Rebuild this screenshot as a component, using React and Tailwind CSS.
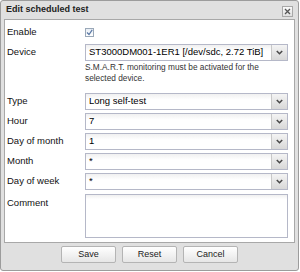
import React from 'react';

const font = { fontFamily: '"Liberation Sans", Arial, sans-serif' };

const Chevron = () => (
  <svg width="7" height="5" viewBox="0 0 7 5">
    <polyline points="0.8,1 3.5,3.7 6.2,1" fill="none" stroke="#4a4a4a" strokeWidth="1.6" />
  </svg>
);

const Combo = ({ value }) => (
  <div className="flex h-[17px] w-[203px] border border-[#b5b8c8] bg-white">
    <div className="flex-1 flex items-center pl-[3px] text-[9.5px] text-black bg-gradient-to-b from-[#f0f0f0] to-white to-[40%] overflow-hidden whitespace-nowrap">
      {value}
    </div>
    <div className="w-[16px] flex items-center justify-center border-l border-[#c8c8c8] bg-gradient-to-b from-[#f4f4f4] to-[#d8d8d8]">
      <Chevron />
    </div>
  </div>
);

const FieldRow = ({ label, value }) => (
  <div className="flex items-center h-[17px] mt-[3px]">
    <span className="w-[78px] text-[9.5px] text-[#111]">{label}</span>
    <Combo value={value} />
  </div>
);

const Button = ({ children }) => (
  <button className="w-[55px] h-[17px] rounded-[2px] border border-[#b4b4b4] bg-gradient-to-b from-white to-[#e6e6e6] text-[9px] text-[#222]">
    {children}
  </button>
);

export default function App() {
  return (
    <div style={font} className="w-[300px] h-[272px] bg-white">
      <div className="w-[299px] h-[271px] flex flex-col rounded-[3px] border border-[#9c9c9c] bg-[#e0e0e0]">
        {/* Header */}
        <div className="h-[18px] flex items-center justify-between pl-[5px] pr-[5px]">
          <span className="text-[9px] font-bold text-[#222]">Edit scheduled test</span>
          <div className="w-[11px] h-[11px] mt-[2px] flex items-center justify-center border border-[#a8a8a8] bg-gradient-to-b from-[#fafafa] to-[#e0e0e0]">
            <svg width="7" height="7" viewBox="0 0 7 7">
              <path d="M1,1 L6,6 M6,1 L1,6" stroke="#555" strokeWidth="1.3" />
            </svg>
          </div>
        </div>

        {/* Body */}
        <div className="mx-[3px] h-[224px] border border-[#a8a8a8] bg-white pl-[2px] pt-[5px]">
          <div className="flex items-center h-[14px]">
            <span className="w-[78px] text-[9.5px] text-[#111]">Enable</span>
            <div className="w-[9px] h-[9px] border border-[#9aa8b8] bg-gradient-to-b from-[#e8eef5] to-white flex items-center justify-center">
              <svg width="7" height="7" viewBox="0 0 7 7">
                <polyline points="1,3.5 3,5.5 6.2,0.8" fill="none" stroke="#5a78a4" strokeWidth="1.2" />
              </svg>
            </div>
          </div>

          <div className="flex mt-[5px]">
            <span className="w-[78px] h-[17px] flex items-center text-[9.5px] text-[#111]">Device</span>
            <div className="flex flex-col">
              <Combo value="ST3000DM001-1ER1 [/dev/sdc, 2.72 TiB]" />
              <p className="mt-[1px] text-[8.3px] leading-[10.5px] text-[#333]">
                S.M.A.R.T. monitoring must be activated for the
                <br />
                selected device.
              </p>
            </div>
          </div>

          <div className="mt-[10px]">
            <FieldRow label="Type" value="Long self-test" />
            <FieldRow label="Hour" value="7" />
            <FieldRow label="Day of month" value="1" />
            <FieldRow label="Month" value="*" />
            <FieldRow label="Day of week" value="*" />
          </div>

          <div className="flex mt-[4px]">
            <span className="w-[78px] pt-[2px] text-[9.5px] text-[#111]">Comment</span>
            <div className="w-[203px] h-[44px] border border-[#b5b8c8] bg-gradient-to-b from-[#f0f0f0] to-white to-[10%]" />
          </div>
        </div>

        {/* Footer */}
        <div className="flex-1 flex items-start justify-center gap-[6px] pt-[3px]">
          <Button>Save</Button>
          <Button>Reset</Button>
          <Button>Cancel</Button>
        </div>
      </div>
    </div>
  );
}
